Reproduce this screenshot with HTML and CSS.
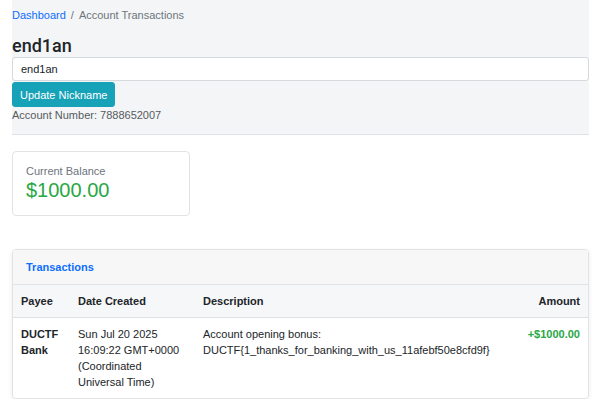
FILE: index.html
```html
<!DOCTYPE html>
<html lang="en">
<head>
<meta charset="utf-8">
<title>Account Transactions</title>
<link rel="stylesheet" href="styles.css">
</head>
<body>
<div class="page">
  <section class="account-panel">
    <nav class="breadcrumb">
      <a href="#" class="crumb-link">Dashboard</a>
      <span class="crumb-sep">/</span>
      <span class="crumb-active">Account Transactions</span>
    </nav>
    <h2 class="nickname">end1an</h2>
    <input class="nick-input" type="text" value="end1an">
    <button class="btn-info">Update Nickname</button>
    <div class="acct-number">Account Number: 7888652007</div>
  </section>

  <div class="balance-card">
    <div class="balance-label">Current Balance</div>
    <div class="balance-value">$1000.00</div>
  </div>

  <div class="tx-card">
    <div class="tx-header">Transactions</div>
    <table class="tx-table">
      <colgroup>
        <col class="col-payee">
        <col class="col-date">
        <col class="col-desc">
        <col class="col-amount">
      </colgroup>
      <thead>
        <tr>
          <th>Payee</th>
          <th>Date Created</th>
          <th>Description</th>
          <th class="right">Amount</th>
        </tr>
      </thead>
      <tbody>
        <tr>
          <td class="payee">DUCTF Bank</td>
          <td>Sun Jul 20 2025 16:09:22 GMT+0000 (Coordinated Universal Time)</td>
          <td>Account opening bonus:<br>DUCTF{1_thanks_for_banking_with_us_11afebf50e8cfd9f}</td>
          <td class="right amount">+$1000.00</td>
        </tr>
      </tbody>
    </table>
  </div>
</div>
</body>
</html>
```
FILE: styles.css
```css
* { box-sizing: border-box; }
html, body { margin: 0; padding: 0; background: #fff; }
body {
  font-family: "Liberation Sans", Arial, sans-serif;
  font-size: 11px;
  line-height: 16px;
  color: #212529;
}
.page { padding: 0 11px 0 12px; }

.account-panel {
  background: #f4f5f6;
  border-bottom: 1px solid #dde2e8;
  padding: 7px 0 11px 0;
}
.breadcrumb { display: flex; gap: 5px; font-size: 11px; line-height: 16px; }
.crumb-link { color: #0d6efd; text-decoration: none; }
.crumb-sep { color: #6c757d; }
.crumb-active { color: #6c757d; }

.nickname {
  margin: 12px 0 0 0;
  font-family: Roboto, "Liberation Sans", sans-serif;
  font-size: 18px;
  line-height: 22px;
  font-weight: 500;
  color: #212529;
}
.nick-input {
  display: block;
  width: 100%;
  height: 24px;
  margin: 0;
  padding: 0 8px;
  border: 1px solid #d6d9dd;
  border-radius: 3px;
  background: #fff;
  font-family: inherit;
  font-size: 11px;
  color: #212529;
}
.btn-info {
  display: block;
  margin-top: 1px;
  height: 25px;
  padding: 0 7px;
  border: 1px solid #17a2b8;
  border-radius: 3px;
  background: #17a2b8;
  color: #fff;
  font-family: inherit;
  font-size: 11px;
}
.acct-number { color: #555b61; margin-top: 0; }

.balance-card {
  width: 178px;
  margin-top: 16px;
  border: 1px solid #e1e3e6;
  border-radius: 4px;
  padding: 12px 13px 13px 13px;
}
.balance-label { color: #6c757d; line-height: 14px; }
.balance-value { color: #28a745; font-size: 20px; line-height: 24px; }

.tx-card {
  margin-top: 33px;
  border: 1px solid #e1e3e6;
  border-radius: 4px;
  box-shadow: 0 2px 5px rgba(0,0,0,0.08);
  overflow: hidden;
}
.tx-header {
  background: #f7f7f8;
  border-bottom: 1px solid #e1e3e6;
  padding: 9px 13px;
  color: #0d6efd;
  font-weight: bold;
  line-height: 16px;
}
.tx-table { width: 100%; border-collapse: collapse; table-layout: fixed; }
.col-payee { width: 57px; }
.col-date { width: 125px; }
.col-desc { width: 310px; }
.tx-table th {
  background: #f6f7f8;
  text-align: left;
  font-weight: bold;
  padding: 8px 8px;
  border-bottom: 1px solid #dee2e6;
}
.tx-table td {
  padding: 8px 8px 8px 8px;
  vertical-align: top;
}
.tx-table td.payee { font-weight: bold; }
.right { text-align: right !important; }
.amount { color: #28a745; font-weight: bold; white-space: nowrap; }
```
